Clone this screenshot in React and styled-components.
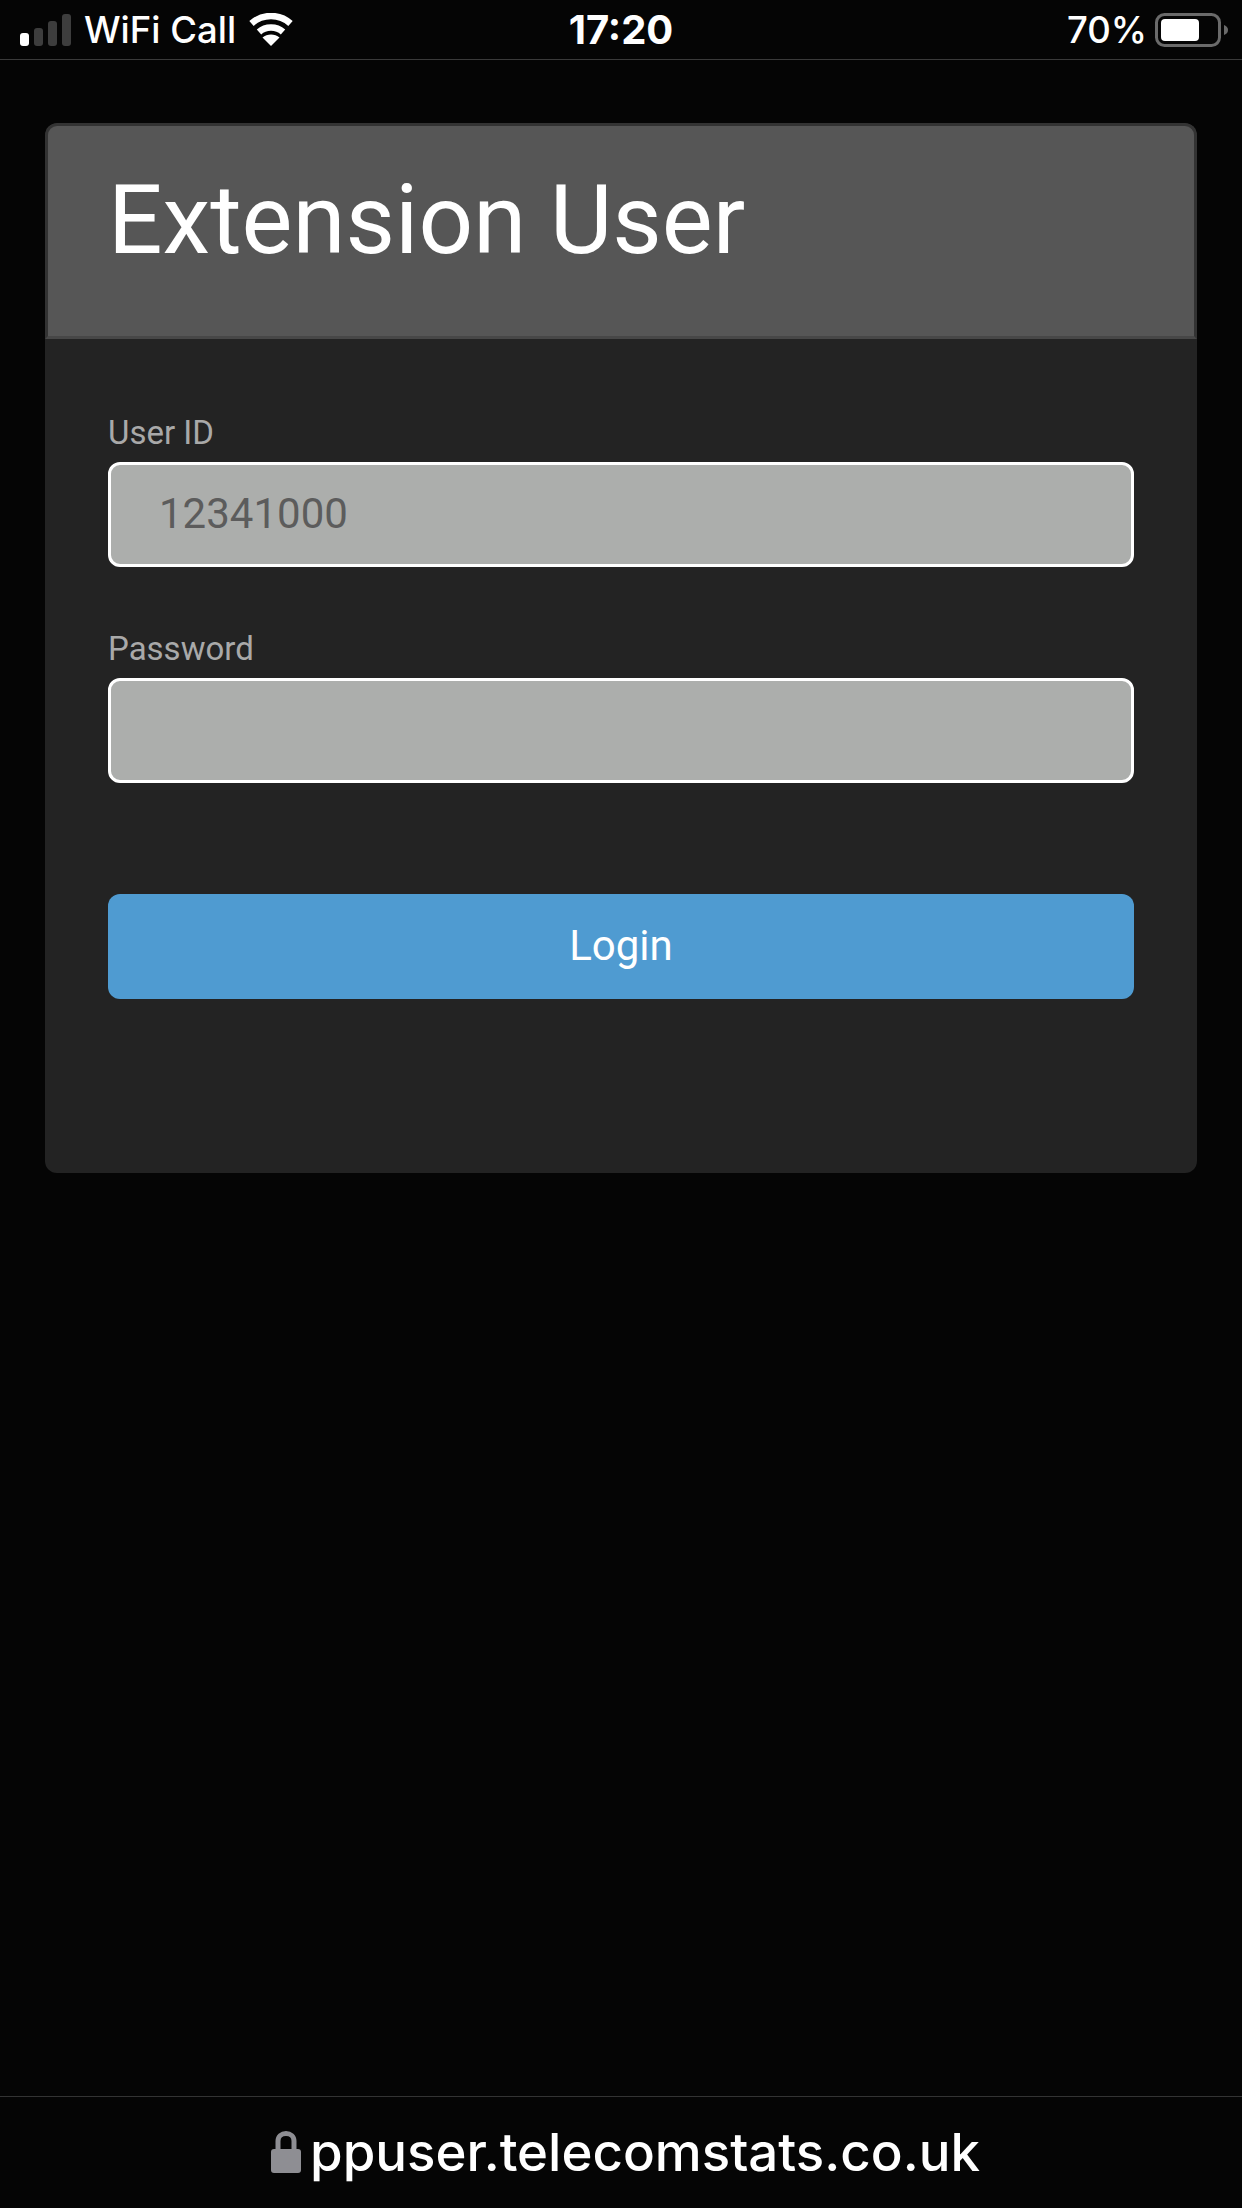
import styled, { createGlobalStyle } from "styled-components";

const GlobalStyle = createGlobalStyle`
  html, body {
    margin: 0;
    padding: 0;
    background: #050505;
  }
  * {
    box-sizing: border-box;
  }
`;

const Page = styled.div`
  width: 1242px;
  height: 2208px;
  display: flex;
  flex-direction: column;
  background: #050505;
  font-family: Roboto, sans-serif;
`;

const StatusBar = styled.div`
  height: 60px;
  flex: none;
  display: grid;
  grid-template-columns: 1fr auto 1fr;
  align-items: center;
  padding: 0 13px;
  border-bottom: 1px solid #3a3a3a;
  color: #fff;
  font-family: Inter, sans-serif;
`;

const StatusLeft = styled.div`
  display: flex;
  align-items: center;
  gap: 12px;
  padding-left: 7px;
`;

const StatusRight = styled.div`
  display: flex;
  align-items: center;
  justify-content: flex-end;
  gap: 8px;
`;

const StatusText = styled.span`
  font-size: ${(p) => (p.$bold ? 40 : 36.5)}px;
  font-weight: ${(p) => (p.$bold ? 700 : 500)};
  line-height: 40px;
`;

const Content = styled.main`
  flex: 1;
  padding: 63px 45px 0;
`;

const Card = styled.section`
  height: 1050px;
  background: #232323;
  border-radius: 12px;
  overflow: hidden;
`;

const CardHeader = styled.header`
  height: 216px;
  padding: 38px 0 0 60px;
  background: #565656;
  border: 3px solid #333;
  border-bottom: 3px solid #474747;
  border-radius: 12px 12px 0 0;
`;

const Title = styled.h1`
  margin: 0;
  color: #fff;
  font-size: 96px;
  font-weight: 400;
  line-height: 112px;
`;

const Form = styled.form`
  display: flex;
  flex-direction: column;
  padding: 74px 63px 0;
`;

const Field = styled.div`
  display: flex;
  flex-direction: column;
  margin-bottom: 62px;
`;

const Label = styled.label`
  height: 40px;
  margin-bottom: 9px;
  color: #a9a9a9;
  font-size: 33px;
  line-height: 40px;
`;

const Input = styled.div`
  height: 105px;
  padding: 0 0 2px 48px;
  display: flex;
  align-items: center;
  background: #acaeac;
  border: 3px solid #fff;
  border-radius: 12px;
  color: #5c5c5c;
  font-size: 42px;
`;

const LoginButton = styled.button`
  height: 105px;
  margin-top: 49px;
  padding: 0 0 2px;
  border: none;
  border-radius: 12px;
  background: #4f9bd1;
  color: #fff;
  font-family: Roboto, sans-serif;
  font-size: 42px;
`;

const AddressBar = styled.footer`
  height: 112px;
  flex: none;
  display: flex;
  align-items: center;
  justify-content: center;
  gap: 9px;
  padding: 0 0 2px 9px;
  border-top: 1px solid #333;
  color: #fff;
  font-family: Inter, sans-serif;
  font-size: 52.8px;
  font-weight: 500;
`;

const SignalIcon = () => (
  <svg width="52" height="34" viewBox="0 0 52 34">
    <rect x="0" y="20" width="9" height="13" rx="3" fill="#fff" />
    <rect x="14" y="15" width="9" height="18" rx="3" fill="#3d3d3d" />
    <rect x="28" y="8" width="9" height="25" rx="3" fill="#3d3d3d" />
    <rect x="42" y="1" width="9" height="32" rx="3" fill="#3d3d3d" />
  </svg>
);

const WifiIcon = () => (
  <svg width="46" height="34" viewBox="0 0 46 34" fill="none">
    <path d="M3.500 10.500C14.500 0.500 31.500 0.500 42.500 10.500" stroke="#fff" strokeWidth="6.500" />
    <path d="M11 19C17.500 13 28.500 13 35 19" stroke="#fff" strokeWidth="6.500" />
    <path d="M23 33L14.500 24.500C19 20.500 27 20.500 31.500 24.500Z" fill="#fff" />
  </svg>
);

const BatteryIcon = () => (
  <svg width="74" height="34" viewBox="0 0 74 34">
    <rect x="1.500" y="1.500" width="63" height="31" rx="8" fill="none" stroke="#6a6a6a" strokeWidth="3" />
    <rect x="6" y="6" width="38" height="22" rx="4" fill="#fff" />
    <path d="M69 12C72 13 73 15 73 17S72 21 69 22Z" fill="#6a6a6a" />
  </svg>
);

const LockIcon = () => (
  <svg width="30" height="42" viewBox="0 0 30 42">
    <path d="M7 20V10C7 5.500 10.500 2.500 15 2.500S23 5.500 23 10V20" fill="none" stroke="#8e8e93" strokeWidth="5" />
    <rect x="0" y="18" width="30" height="24" rx="3" fill="#8e8e93" />
  </svg>
);

export default function App() {
  return (
    <Page>
      <GlobalStyle />
      <StatusBar>
        <StatusLeft>
          <SignalIcon />
          <StatusText>WiFi Call</StatusText>
          <WifiIcon />
        </StatusLeft>
        <StatusText $bold>17:20</StatusText>
        <StatusRight>
          <StatusText>70%</StatusText>
          <BatteryIcon />
        </StatusRight>
      </StatusBar>
      <Content>
        <Card>
          <CardHeader>
            <Title>Extension User</Title>
          </CardHeader>
          <Form>
            <Field>
              <Label>User ID</Label>
              <Input>12341000</Input>
            </Field>
            <Field>
              <Label>Password</Label>
              <Input />
            </Field>
            <LoginButton type="button">Login</LoginButton>
          </Form>
        </Card>
      </Content>
      <AddressBar>
        <LockIcon />
        <span>ppuser.telecomstats.co.uk</span>
      </AddressBar>
    </Page>
  );
}
